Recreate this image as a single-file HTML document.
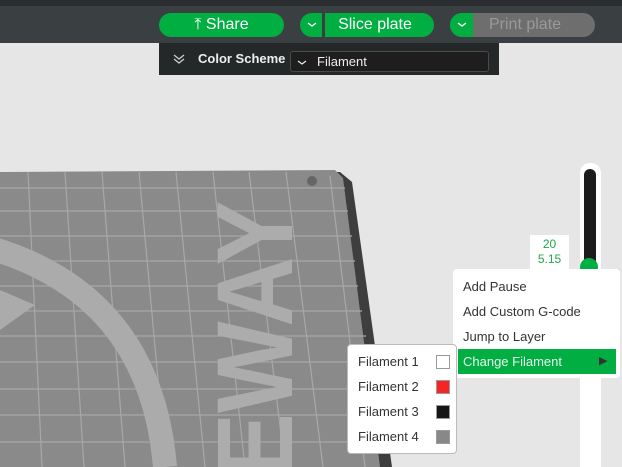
<!DOCTYPE html>
<html><head><style>
body{margin:0;width:622px;height:467px;overflow:hidden;background:#e6e6e6;font-family:"Liberation Sans",sans-serif;position:relative}
.a{position:absolute}
.btn{position:absolute;top:13px;height:24px;border-radius:12px;background:#00ae42;color:#fff;font-size:16px;line-height:24px;text-align:center}
.mi{position:absolute;left:10px;font-size:13px;color:#333}
.sw{position:absolute;left:88px;width:12px;height:12px;border:1px solid #999}
</style></head><body>
<svg class="a" style="left:0;top:0" width="622" height="467">
<polygon points="0,175 340,172 352,182 392,467 0,467" fill="#3e3e3e"/>
<polygon points="0,172 335,170 343,178 380,467 0,467" fill="#8a8a8a"/>
<g stroke="#a8a8a8" stroke-width="1.2">
<line x1="0" y1="188" x2="345" y2="188"/><line x1="0" y1="211" x2="348" y2="211"/><line x1="0" y1="236" x2="352" y2="236"/>
<line x1="0" y1="261" x2="355" y2="261"/><line x1="0" y1="286" x2="358" y2="286"/><line x1="0" y1="311" x2="362" y2="311"/>
<line x1="0" y1="336" x2="366" y2="336"/><line x1="0" y1="362" x2="370" y2="362"/><line x1="0" y1="389" x2="373" y2="389"/>
<line x1="0" y1="415" x2="377" y2="415"/><line x1="0" y1="442" x2="380" y2="442"/>
<line x1="28" y1="172" x2="42" y2="467"/><line x1="65" y1="172" x2="84" y2="467"/><line x1="102" y1="172" x2="125" y2="467"/>
<line x1="139" y1="172" x2="166" y2="467"/><line x1="176" y1="172" x2="205" y2="467"/><line x1="213" y1="172" x2="245" y2="467"/>
<line x1="249" y1="172" x2="285" y2="467"/><line x1="286" y1="172" x2="323" y2="467"/><line x1="330" y1="176" x2="365" y2="467"/>
</g>
<path d="M-20,245 Q150,290 165,467" stroke="#ababab" stroke-width="24" fill="none"/>
<polygon points="0,290 35,305 0,330" fill="#ababab"/>
<text transform="translate(292,478) scale(1,0.9) rotate(-90)" font-size="108" font-weight="bold" fill="#acacac" font-family="Liberation Sans">EWAY</text>
<circle cx="312" cy="181" r="5" fill="#666"/>
<rect x="580" y="173" width="21" height="294" fill="#fff"/>
<rect x="580" y="163" width="21" height="24" rx="10" fill="#fff"/>
<rect x="584" y="169" width="12" height="100" rx="6" fill="#1c1c1c"/>
<circle cx="589" cy="267" r="9" fill="#00ae42"/>
</svg>
<div class="a" style="left:0;top:0;width:622px;height:43px;background:#3a3f42"></div>
<div class="a" style="left:0;top:0;width:622px;height:6px;background:#2a2e30"></div>
<div class="btn" style="left:159px;width:125px">⤒ Share</div>
<div class="btn" style="left:300px;width:134px"></div>
<div class="a" style="left:322px;top:13px;width:3px;height:24px;background:#3a3f42"></div>
<svg class="a" style="left:306px;top:21px" width="12" height="8"><path d="M2,2 L6,5 L10,2" stroke="#fff" stroke-width="1.3" fill="none"/></svg>
<div class="a" style="left:325px;top:13px;width:100px;line-height:24px;color:#fff;font-size:16px;text-align:center">Slice plate</div>
<div class="btn" style="left:450px;width:145px;background:#6e6e6e;color:#9a9a9a;text-align:left"><span style="display:inline-block;width:23px;height:24px;background:#00ae42;border-radius:12px 0 0 12px;vertical-align:top"></span><span style="padding-left:16px">Print plate</span></div>
<svg class="a" style="left:456px;top:21px" width="12" height="8"><path d="M2,2 L6,5 L10,2" stroke="#fff" stroke-width="1.3" fill="none"/></svg>
<div class="a" style="left:159px;top:43px;width:340px;height:32px;background:#252829"></div>
<svg class="a" style="left:172px;top:53px" width="14" height="12"><path d="M2,2 L7,6 L12,2 M2,6 L7,10 L12,6" stroke="#ccc" stroke-width="1.3" fill="none"/></svg>
<div class="a" style="left:198px;top:51px;color:#eee;font-size:13px;font-weight:bold">Color Scheme</div>
<div class="a" style="left:290px;top:51px;width:197px;height:19px;border:1px solid #4a4a4a;border-radius:3px;background:#1e1e1e;color:#eee;font-size:13px;line-height:19px"><svg width="26" height="10" style="vertical-align:middle"><path d="M7,3 L11,6 L15,3" stroke="#eee" stroke-width="1.2" fill="none"/></svg>Filament</div>
<div class="a" style="left:530px;top:235px;width:39px;height:33px;background:#fff;color:#1ea84a;font-size:12px;text-align:center;line-height:15px;padding-top:2px">20<br>5.15</div>
<div class="a" style="left:453px;top:269px;width:167px;height:109px;background:#fff;border-radius:4px">
<div class="mi" style="top:10px">Add Pause</div>
<div class="mi" style="top:35px">Add Custom G-code</div>
<div class="mi" style="top:60px">Jump to Layer</div>
<div class="a" style="left:5px;top:80px;width:158px;height:25px;background:#00ae42"></div>
<div class="mi" style="top:85px;color:#e8f8ee">Change Filament</div>
<div class="a" style="left:146px;top:85px;color:#333;font-size:11px">▶</div>
</div>
<div class="a" style="left:347px;top:344px;width:108px;height:108px;background:#fff;border:1px solid #bbb;border-radius:4px">
<div class="mi" style="top:9px">Filament 1</div><div class="sw" style="top:10px;background:#fff"></div>
<div class="mi" style="top:34px">Filament 2</div><div class="sw" style="top:35px;background:#f52525"></div>
<div class="mi" style="top:59px">Filament 3</div><div class="sw" style="top:60px;background:#161616"></div>
<div class="mi" style="top:84px">Filament 4</div><div class="sw" style="top:85px;background:#888"></div>
</div>
</body></html>
